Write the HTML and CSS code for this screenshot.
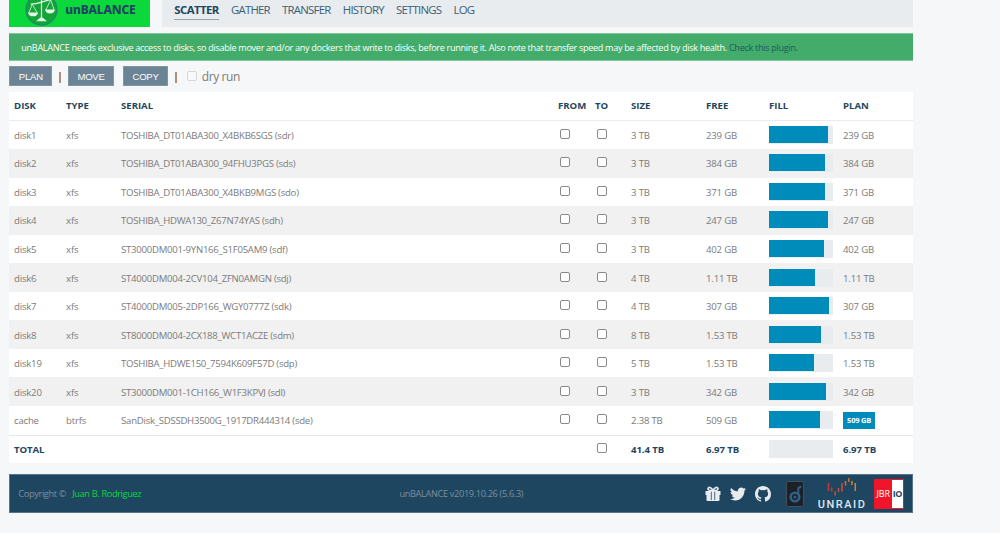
FILE: index.html
```html
<!DOCTYPE html>
<html>
<head>
	<meta charset="utf-8">
	<title>unBALANCE</title>
	<link rel="stylesheet" href="styles.css">
</head>
<body>
<div class="container">
	<header class="header">
		<div class="logo">
			<svg class="logo-icon" viewBox="0 0 34 34">
				<circle cx="17" cy="17" r="16" fill="#13a538" stroke="#1c8f62" stroke-width="1.4"/>
				<g fill="none" stroke="#e4f8e6" stroke-width="1.3">
					<path d="M17 4v23M6 11.500q5 0 11-2t10-3" />
					<path d="M7.500 11.500L4 20.500M7.500 11.500l5 9M26.500 7l-5 10.500M26.500 7l3.500 10.500" stroke-width=".8"/>
				</g>
				<path d="M3 20h10.500q-1 4-5.200 4T3 20zM20.500 17H31q-1 4-5.200 4t-5.300-4zM15.500 25.500h3l4 3.500H11.500z" fill="#e4f8e6"/>
			</svg>
			<span class="logo-text">unBALANCE</span>
		</div>
		<nav class="menu">
			<a class="active">SCATTER</a>
			<a>GATHER</a>
			<a>TRANSFER</a>
			<a>HISTORY</a>
			<a>SETTINGS</a>
			<a>LOG</a>
		</nav>
	</header>

	<div class="notice"><span>unBALANCE needs exclusive access to disks, so disable mover and/or any dockers that write to disks, before running it. Also note that transfer speed may be affected by disk health.</span> <a>Check this plugin.</a></div>

	<div class="toolbar">
		<button class="b-plan">PLAN</button>
		<i class="sep"></i>
		<button class="b-move">MOVE</button>
		<button class="b-copy">COPY</button>
		<i class="sep"></i>
		<label><input type="checkbox" class="dry"><span>dry run</span></label>
	</div>

	<div class="table" id="disks">
		<div class="row head">
			<span>DISK</span><span>TYPE</span><span>SERIAL</span><span>FROM</span><span>TO</span><span>SIZE</span><span>FREE</span><span>FILL</span><span>PLAN</span>
		</div>
	</div>

	<footer class="footer">
		<div class="copy">Copyright © <a>Juan B. Rodriguez</a></div>
		<div class="version"><span>unBALANCE v2019.10.26 (5.6.3)</span></div>
		<div class="links">
			<svg class="gift" viewBox="0 0 16 15" fill="#e8ecef">
				<path d="M.5 5h15v4h-1v5q0 1-1 1h-11q-1 0-1-1V9h-1z"/>
				<path d="M6.300 5.500v8.500M9.700 5.500v8.500" stroke="#1f4661" stroke-width=".8"/>
				<path d="M8 5C6.500 1 3.200.5 3 2.800 3 4.300 5 4.800 8 5c1.500-4 4.800-4.500 5-2.200 0 1.500-2 2-5 2.200" fill="none" stroke="#e8ecef" stroke-width="1.700"/>
			</svg>
			<svg class="twitter" viewBox="0 0 24 24" fill="#e8ecef"><path d="M23.950 4.570a10 10 0 0 1-2.820.770 4.960 4.960 0 0 0 2.160-2.720c-.950.550-2 .950-3.130 1.180a4.920 4.920 0 0 0-8.380 4.480C7.690 8.090 4.070 6.130 1.640 3.160a4.920 4.920 0 0 0 1.520 6.570 4.900 4.900 0 0 1-2.230-.610v.060a4.920 4.920 0 0 0 3.950 4.830 5 5 0 0 1-2.210.080 4.940 4.940 0 0 0 4.600 3.420A9.870 9.870 0 0 1 0 19.540a14 14 0 0 0 7.550 2.210c9.050 0 14-7.500 14-13.980 0-.210 0-.420-.020-.630a9.940 9.940 0 0 0 2.460-2.550z"/></svg>
			<svg class="github" viewBox="0 0 16 16" fill="#e8ecef"><path d="M8 0C3.580 0 0 3.580 0 8c0 3.540 2.290 6.530 5.470 7.590.4.070.55-.17.55-.38v-1.340c-2.230.480-2.690-1.070-2.690-1.070-.360-.930-.890-1.170-.890-1.170-.730-.500.050-.490.050-.490.800.060 1.230.820 1.230.820.710 1.220 1.870.870 2.330.660.070-.520.280-.870.510-1.070-1.780-.200-3.640-.890-3.640-3.950 0-.870.310-1.590.820-2.150-.080-.200-.360-1.020.080-2.120 0 0 .670-.210 2.200.820a7.600 7.600 0 0 1 4 0c1.530-1.040 2.200-.820 2.200-.820.440 1.100.160 1.920.080 2.120.510.560.820 1.270.820 2.150 0 3.070-1.870 3.750-3.650 3.950.290.250.540.730.540 1.480v2.190c0 .210.150.460.550.380A8 8 0 0 0 16 8c0-4.420-3.580-8-8-8z"/></svg>
			<svg class="speaker" viewBox="0 0 18 26">
				<rect x=".5" y=".5" width="17" height="25" rx="2" fill="#1b2127" stroke="#40505d"/>
				<circle cx="9" cy="16" r="4.300" fill="none" stroke="#315f86" stroke-width="2.600"/>
				<circle cx="9" cy="16" r="1.600" fill="#315f86"/>
				<path d="M12.300 14V7l3-1.500" fill="none" stroke="#315f86" stroke-width="2"/>
			</svg>
			<div class="unraid">
				<svg viewBox="0 0 30 18" fill="none" stroke-width="1.500">
					<path d="M1.500 5v8M4.800 9.500v4" stroke="#c5393b"/>
					<path d="M8.200 13.500v4M11.500 10v4M15 5v8.500" stroke="#d04e36"/>
					<path d="M18.500 3v4.500M21.800 0v4" stroke="#d66b32"/>
					<path d="M25 3v4M28.300 5v8" stroke="#d88230"/>
				</svg>
				<span>UNRAID</span>
			</div>
			<div class="jbrio"><span>JBR</span><span class="io">IO</span></div>
		</div>
	</footer>
</div>
<script>
	const disks = [
		["disk1", "xfs", "TOSHIBA_DT01ABA300_X4BKB6SGS (sdr)", "3 TB", "239 GB", 92],
		["disk2", "xfs", "TOSHIBA_DT01ABA300_94FHU3PGS (sds)", "3 TB", "384 GB", 87.5],
		["disk3", "xfs", "TOSHIBA_DT01ABA300_X4BKB9MGS (sdo)", "3 TB", "371 GB", 87.5],
		["disk4", "xfs", "TOSHIBA_HDWA130_Z67N74YAS (sdh)", "3 TB", "247 GB", 92],
		["disk5", "xfs", "ST3000DM001-9YN166_S1F05AM9 (sdf)", "3 TB", "402 GB", 86.5],
		["disk6", "xfs", "ST4000DM004-2CV104_ZFN0AMGN (sdj)", "4 TB", "1.11 TB", 72],
		["disk7", "xfs", "ST4000DM005-2DP166_WGY0777Z (sdk)", "4 TB", "307 GB", 93],
		["disk8", "xfs", "ST8000DM004-2CX188_WCT1ACZE (sdm)", "8 TB", "1.53 TB", 80.5],
		["disk19", "xfs", "TOSHIBA_HDWE150_7594K609F57D (sdp)", "5 TB", "1.53 TB", 69.5],
		["disk20", "xfs", "ST3000DM001-1CH166_W1F3KPVJ (sdl)", "3 TB", "342 GB", 89],
		["cache", "btrfs", "SanDisk_SDSSDH3500G_1917DR444314 (sde)", "2.38 TB", "509 GB", 79],
	];
	const check = '<span><input type="checkbox"></span>';

	function row(cls, d, from, plan) {
		return `<div class="row ${cls}"><span>${d[0]}</span><span>${d[1]}</span><span class="serial">${d[2]}</span>${from}${check}
			<span>${d[3]}</span><span>${d[4]}</span>
			<div class="bar"><div style="width:${d[5]}%"></div></div><span>${plan}</span></div>`;
	}

	let html = "";
	disks.forEach(d => {
		html += row("", d, check, d[0] === "cache" ? `<b class="badge">${d[4]}</b>` : d[4]);
	});
	html += row("total", ["TOTAL", "", "", "41.4 TB", "6.97 TB", 0], "<span></span>", "6.97 TB");
	document.getElementById("disks").insertAdjacentHTML("beforeend", html);
</script>
</body>
</html>
```
FILE: styles.css
```css
* {
	box-sizing: border-box;
}
body {
	margin: 0;
	height: 533px;
	overflow: hidden;
	background: #f5f7f9;
	font-family: "Open Sans", "Noto Sans", sans-serif;
	font-size: 9.600px;
	color: #7b7b7b;
}
.container {
	width: 903.500px;
	margin-left: 9.300px;
}
.header {
	display: flex;
	gap: 12px;
	height: 26.500px;
}
.logo {
	width: 141px;
	background: #0bd83b;
	display: flex;
	overflow: hidden;
}
.logo-icon {
	flex: none;
	width: 33px;
	height: 33px;
	margin: -7px 7px 0 16px;
}
.logo-text {
	font-family: "Noto Sans", sans-serif;
	font-size: 12px;
	font-weight: 800;
	line-height: 20px;
	letter-spacing: -.2px;
	color: #1f4661;
}
.menu {
	flex: 1;
	display: flex;
	gap: 12.200px;
	padding-left: 12px;
	background: #e8ecef;
	font-size: 11.400px;
	line-height: 20px;
	letter-spacing: -.76px;
	color: #3b6078;
}
.menu a {
	height: 20px;
}
.menu .active {
	font-weight: bold;
	letter-spacing: -.58px;
	color: #1f4661;
	border-bottom: 1.500px solid #8da5b5;
}
.notice {
	height: 28px;
	margin-top: 6px;
	padding-left: 12px;
	border: 1px solid #7fc79a;
	border-width: 1px 0;
	background: #43ac6a;
	color: #fff;
	line-height: 27px;
	font-size: 9.100px;
	letter-spacing: -.31px;
	white-space: nowrap;
}
.notice a {
	color: #1f5a62;
}
.toolbar {
	display: flex;
	align-items: center;
	height: 31px;
}
button {
	height: 19.500px;
	padding: 0;
	border: 1px solid #8195a3;
	background: #6a8495;
	color: #fff;
	font-family: "Liberation Sans", sans-serif;
	font-size: 9.500px;
	letter-spacing: -.2px;
}
.b-plan { width: 43px; }
.b-move { width: 46px; margin-right: 9px; }
.b-copy { width: 45px; }
.sep {
	width: 1.400px;
	height: 11px;
	margin: 2px 7.200px 0;
	background: #a98f80;
}
.toolbar label {
	display: flex;
	align-items: center;
	gap: 5px;
	font-size: 12px;
	letter-spacing: -.4px;
	margin-left: 3px;
}
input[type="checkbox"] {
	appearance: none;
	display: block;
	width: 10px;
	height: 10px;
	margin: 0;
	border: 1px solid #8a8a8a;
	border-radius: 2px;
	background: #fff;
}
input.dry {
	border-color: #d5d8d8;
	background: #f8f9f9;
}
.table {
	background: #fff;
}
.row {
	display: grid;
	grid-template-columns: 52px 55px 437px 37px 36px 75px 63px 74px 1fr;
	align-items: center;
	height: 28.550px;
	padding-left: 4.800px;
	letter-spacing: -.22px;
	white-space: nowrap;
}
.row > span {
	padding-top: 1px;
}
.row .serial {
	letter-spacing: -.26px;
}
.row:nth-child(odd) {
	background: #f1f1f1;
}
.row.head {
	height: 29px;
	background: #fff;
	border-bottom: 1px solid #e8ecef;
	font-weight: bold;
	letter-spacing: -.05px;
	color: #1f4661;
}
.row.head > span {
	padding-top: 0;
}
.row.total {
	background: #fff;
	border-top: 1px solid #e1e7ea;
	font-weight: bold;
	letter-spacing: -.1px;
	color: #1f4661;
}
.row input {
	margin: -3px 0 0 2.400px;
}
.bar {
	width: 64px;
	height: 18px;
	background: #e8ecef;
}
.bar div {
	height: 17px;
	background: #008cba;
}
.badge {
	display: block;
	width: 32px;
	height: 17px;
	background: #008cba;
	color: #fff;
	font-size: 7.500px;
	line-height: 17px;
	text-align: center;
}
.footer {
	display: flex;
	align-items: center;
	height: 39px;
	margin-top: 11px;
	padding: 0 8px;
	background: #1f4661;
	border: 1px solid #55748a;
	color: #7d8f9c;
	font-size: 9.200px;
	letter-spacing: -.34px;
}
.copy {
	width: 300px;
}
.copy a {
	margin-left: 4px;
	color: #0bd83b;
}
.version {
	width: 286px;
	text-align: center;
}
.links {
	flex: 1;
	display: flex;
	align-items: center;
	justify-content: flex-end;
}
.gift { width: 16px; height: 15px; margin-right: 9px; }
.twitter { width: 16px; height: 16px; margin-right: 9px; }
.github { width: 16px; height: 16px; margin-right: 15px; }
.speaker { width: 18px; height: 26px; margin-right: 14px; }
.unraid {
	width: 48px;
	margin-right: 8px;
	text-align: center;
	color: #dfe6ea;
	font-family: "Roboto", sans-serif;
	font-size: 11px;
	font-weight: 500;
	line-height: 11px;
	letter-spacing: 1.500px;
}
.unraid svg {
	display: block;
	width: 30px;
	height: 18px;
	margin: 0 auto 3px;
}
.jbrio {
	display: flex;
	width: 30px;
	height: 30px;
	border: 1px solid #f0152b;
	background: #f0152b;
	color: #fff;
	font-size: 9px;
	line-height: 28px;
	letter-spacing: -.1px;
}
.jbrio span {
	width: 17px;
	text-align: center;
}
.jbrio .io {
	width: 11px;
	background: #fff;
	color: #1f4661;
	font-weight: bold;
	letter-spacing: -.5px;
}
```
